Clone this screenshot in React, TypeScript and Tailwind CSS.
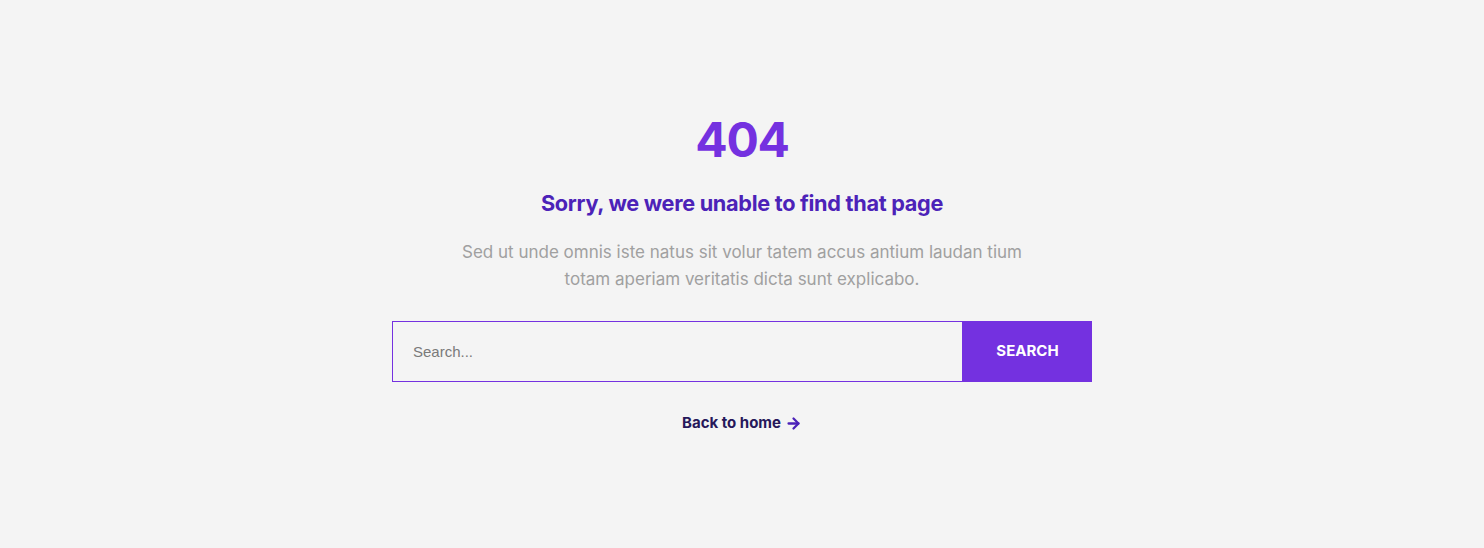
import { ArrowRight } from "lucide-react";

export default function App() {
    return (
        <div className="min-h-[548px] w-full bg-[#f4f4f4] font-['Inter',sans-serif] flex flex-col items-center pt-[110px]">
            <h1 className="text-[48px] leading-[60px] font-bold text-[#7431e0] tracking-tight">404</h1>
            <h2 className="mt-[18px] text-[21.7px] leading-[30px] font-bold text-[#4c22b8] tracking-[-0.3px]">
                Sorry, we were unable to find that page
            </h2>
            <p className="mt-[21px] w-[580px] text-center text-[17px] leading-[27px] text-[#a0a0a0] tracking-[0px]">
                Sed ut unde omnis iste natus sit volur tatem accus antium laudan tium totam aperiam veritatis dicta sunt explicabo.
            </p>
            <form className="mt-[28px] flex w-[700px] h-[61px]">
                <input
                    type="text"
                    placeholder="Search..."
                    className="flex-1 h-full border border-[#7431e0] bg-[#f4f4f4] px-5 text-[15px] font-['Liberation_Sans',sans-serif] text-[#555] placeholder:text-[#7a7a7a] outline-none"
                />
                <button type="button" className="w-[129px] h-full bg-[#7431e0] text-white text-[15px] font-bold uppercase">
                    Search
                </button>
            </form>
            <a href="#" className="mt-[30px] flex items-center gap-1 text-[15px] font-bold text-[#26185a]">
                Back to home
                <ArrowRight className="w-[17px] h-[17px] text-[#4c22b8]" strokeWidth={3.2} />
            </a>
        </div>
    );
}
